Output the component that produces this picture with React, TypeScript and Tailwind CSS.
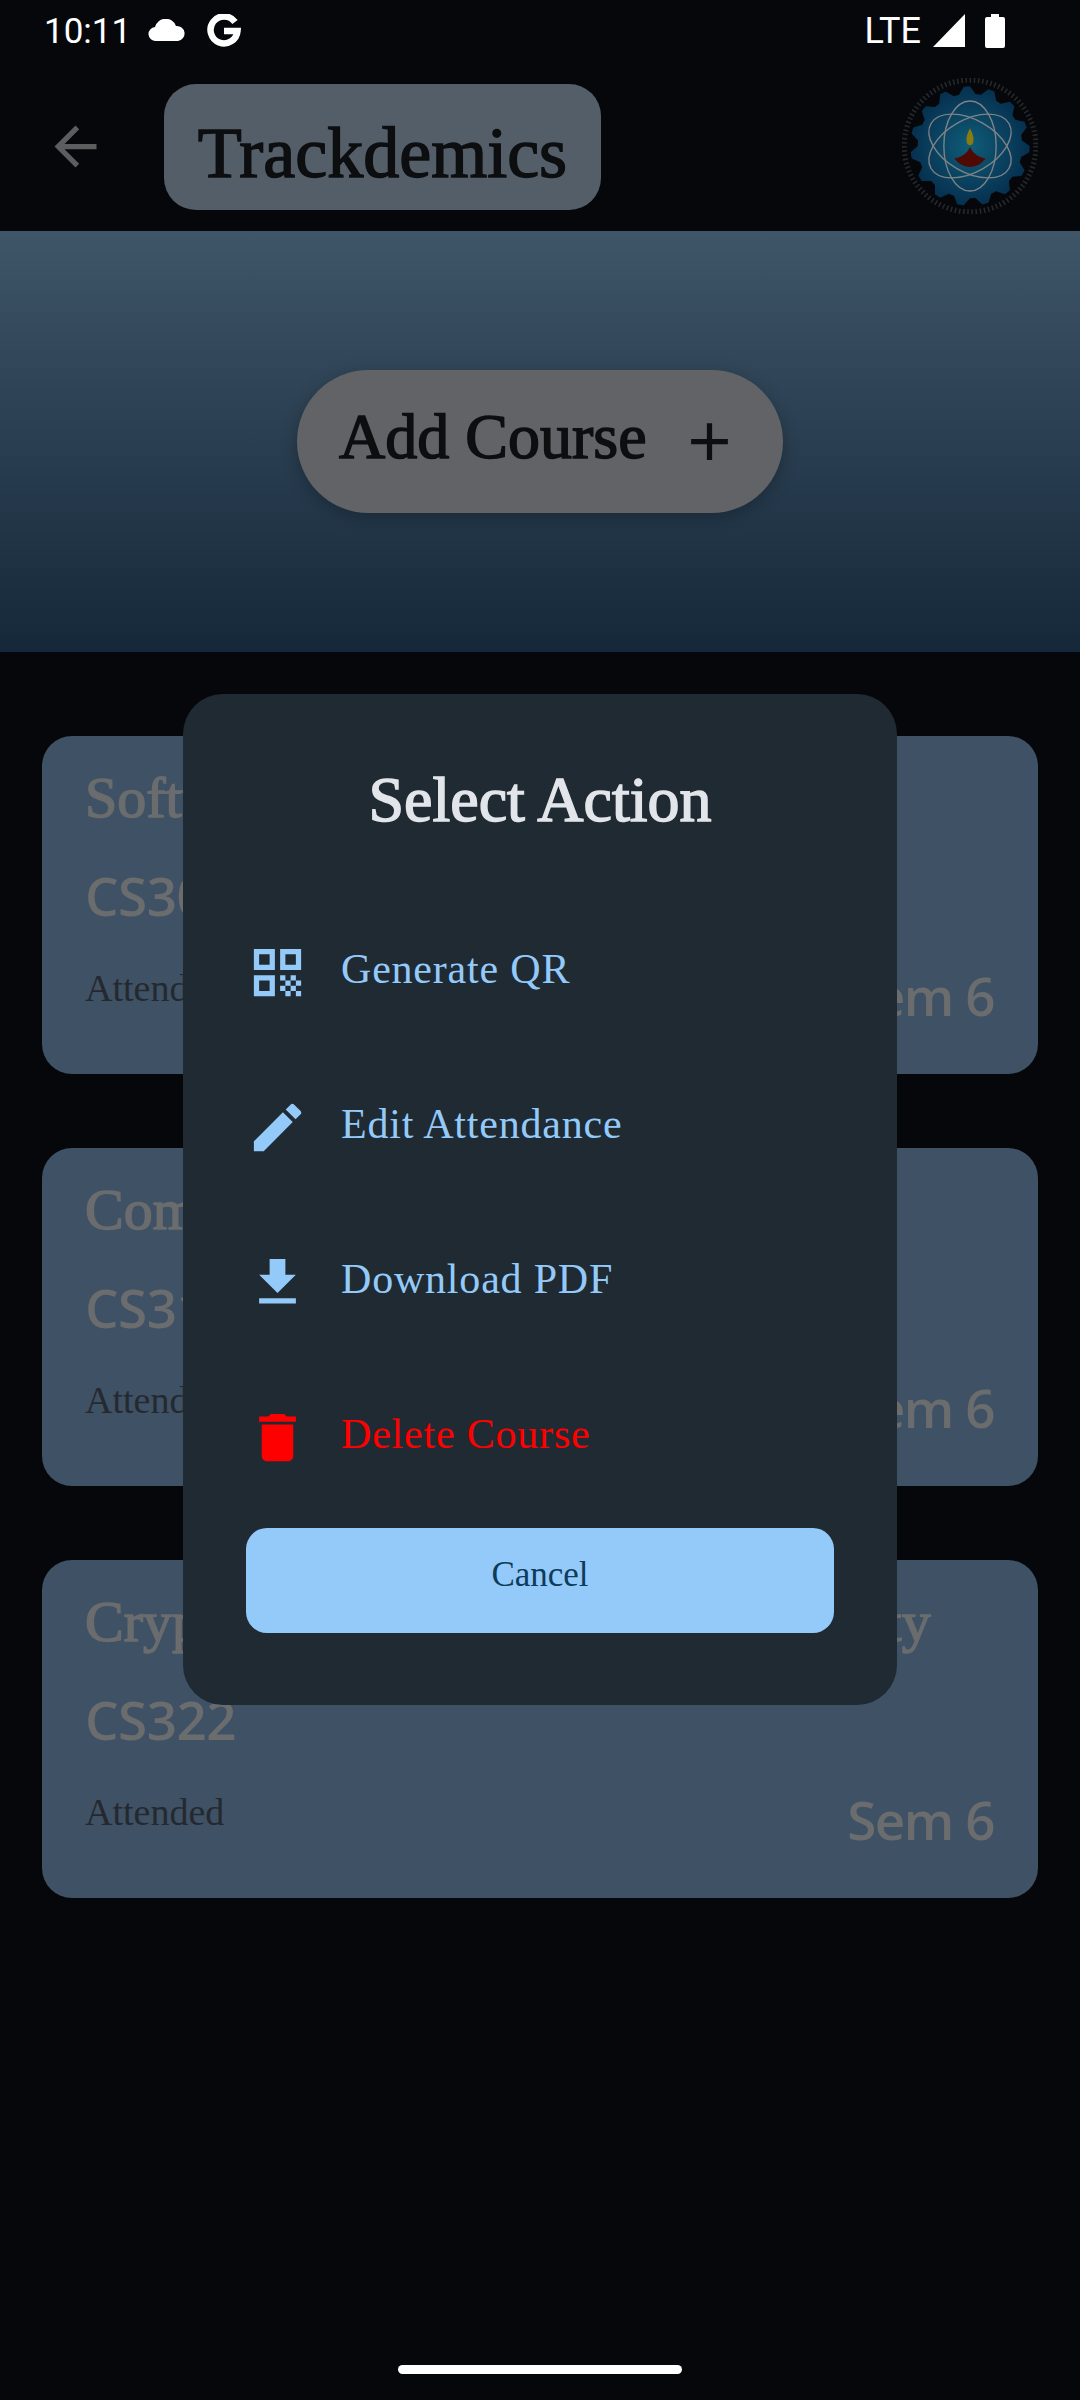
import { MdAdd, MdArrowBack, MdDelete, MdEdit, MdFileDownload, MdQrCode } from "react-icons/md";

const serif = "font-['Liberation_Serif',serif]";
const sans = "font-['Open_Sans',sans-serif]";

const courses = [
  { name: "Software Engineering", code: "CS301" },
  { name: "Compiler Design", code: "CS311" },
  { name: "Cryptography and Network Security", code: "CS322" },
];

const actions = [
  { label: "Generate QR", Icon: MdQrCode, color: "text-[#94caf9]" },
  { label: "Edit Attendance", Icon: MdEdit, color: "text-[#94caf9]" },
  { label: "Download PDF", Icon: MdFileDownload, color: "text-[#94caf9]" },
  { label: "Delete Course", Icon: MdDelete, color: "text-[#ff0000]" },
];

const gearPath = () => {
  const teeth = 15;
  const pts: string[] = [];
  for (let i = 0; i < teeth * 4; i++) {
    const r = i % 4 === 0 || i % 4 === 1 ? 57 : 50;
    const a = (i / (teeth * 4)) * Math.PI * 2;
    pts.push(`${(65 + r * Math.cos(a)).toFixed(1)},${(65 + r * Math.sin(a)).toFixed(1)}`);
  }
  return pts.join(" ");
};

const Logo = () => (
  <svg width="136" height="136" viewBox="0 0 130 130">
    <defs>
      <radialGradient id="gear">
        <stop offset="0%" stopColor="#0f5c78" />
        <stop offset="100%" stopColor="#06304f" />
      </radialGradient>
    </defs>
    <circle cx="65" cy="65" r="63" fill="none" stroke="#26292c" strokeWidth="5" strokeDasharray="1.5 2.5" />
    <polygon points={gearPath()} fill="url(#gear)" />
    <g fill="none" stroke="#7f8386" strokeWidth="1.3">
      <ellipse cx="65" cy="65" rx="25" ry="43" />
      <ellipse cx="65" cy="65" rx="25" ry="43" transform="rotate(60 65 65)" />
      <ellipse cx="65" cy="65" rx="25" ry="43" transform="rotate(-60 65 65)" />
    </g>
    <path d="M65 48c3 6 4 10 3 14-1 3-5 3-6 0-1-4 0-8 3-14z" fill="#8a7a12" />
    <path d="M50 77c6-1 12-4 15-11 3 7 9 10 15 11-4 5-9 8-15 8s-11-3-15-8z" fill="#4f0a05" />
  </svg>
);

const StatusBar = () => (
  <div className="h-[62px] flex items-center justify-between pl-[44px] pr-[75px] text-white">
    <div className="flex items-center">
      <span className="font-['Roboto',sans-serif] text-[35px] leading-none">10:11</span>
      <svg className="ml-[17px]" width="38" height="24" viewBox="0 0 38 24" fill="white">
        <path d="M8 22a7 7 0 0 1-1-14 11 11 0 0 1 21-1 7.5 7.5 0 0 1 2 15z" />
      </svg>
      <svg className="ml-[21px]" width="34" height="34" viewBox="0 0 34 34" fill="none" stroke="white" strokeWidth="6.5">
        <path d="M28 8a13.5 13.5 0 1 0 2.5 9H17" />
      </svg>
    </div>
    <div className="flex items-center">
      <span className="font-['Roboto',sans-serif] text-[36px] leading-none">LTE</span>
      <svg className="ml-[12px]" width="32" height="34" viewBox="0 0 32 34" fill="white">
        <path d="M32 0v33H0z" />
      </svg>
      <svg className="ml-[20px]" width="20" height="34" viewBox="0 0 20 34" fill="white">
        <path d="M6 0h8v3h4a2 2 0 0 1 2 2v27a2 2 0 0 1-2 2H2a2 2 0 0 1-2-2V5a2 2 0 0 1 2-2h4z" />
      </svg>
    </div>
  </div>
);

const CourseCard = ({ name, code }: { name: string; code: string }) => (
  <div className="bg-[#3e5165] rounded-[30px] h-[338px] pl-[43px] pr-[44px] pt-[26px]">
    <div className={`${serif} text-[58px] leading-[72px] text-[#6b6c6d] [-webkit-text-stroke:1.5px_#6b6c6d] whitespace-nowrap`}>{name}</div>
    <div className={`${sans} font-semibold text-[53px] leading-[68px] tracking-[-0.5px] mt-[28px] text-[#6b6c6d]`}>{code}</div>
    <div className="flex justify-between items-start mt-[20px]">
      <span className={`${serif} text-[38px] leading-[76px] text-[#25292f]`}>Attended</span>
      <span className={`${sans} font-semibold text-[53px] leading-[76px] tracking-[-1.5px] mt-[8px] text-[#6b6c6d]`}>Sem 6</span>
    </div>
  </div>
);

export default function App() {
  return (
    <div className="relative w-[1080px] h-[2400px] overflow-hidden bg-[#05070a]">
      <StatusBar />

      <div className="h-[169px] flex items-center pl-[44px] pr-[42px]">
        <MdArrowBack className="text-[#5b5d5f] shrink-0" size={63} />
        <div className="ml-[57px] w-[437px] h-[126px] rounded-[32px] bg-[#545e68] flex items-center justify-center">
          <span className={`${serif} pt-[12px] text-[72px] leading-none text-[#0c0e10] [-webkit-text-stroke:1.5px_#0c0e10]`}>Trackdemics</span>
        </div>
        <div className="ml-auto mb-[2px]">
          <Logo />
        </div>
      </div>

      <div className="h-[421px] flex items-center justify-center bg-gradient-to-b from-[#3f5668] to-[#15283a]">
        <div className="w-[486px] h-[143px] rounded-full bg-[#616366] shadow-[0_4px_16px_rgba(0,0,0,0.25)] flex items-center pl-[42px]">
          <span className={`${serif} mb-[10px] text-[64px] leading-none text-[#0c0e10] [-webkit-text-stroke:1.5px_#0c0e10]`}>Add Course</span>
          <MdAdd className="ml-[31px] text-[#0c0e10]" size={63} />
        </div>
      </div>

      <div className="px-[42px] pt-[84px] flex flex-col gap-[74px]">
        {courses.map((c) => (
          <CourseCard key={c.code} name={c.name} code={c.code} />
        ))}
      </div>

      <div className="absolute left-[183px] top-[694px] w-[714px] h-[1011px] rounded-[40px] bg-[#202a33] px-[63px] pt-[60px]">
        <div className={`${serif} text-[64px] leading-[92px] text-center text-[#e2e5e9] [-webkit-text-stroke:1.5px_#e2e5e9]`}>Select Action</div>
        <div className="mt-[49px] flex flex-col">
          {actions.map(({ label, Icon, color }) => (
            <div key={label} className={`h-[155px] flex items-center ${color}`}>
              <Icon size={63} className="shrink-0" />
              <span className={`${serif} ml-[32px] mb-[6px] text-[42px] tracking-[0.8px]`}>{label}</span>
            </div>
          ))}
        </div>
        <div className="mt-[13px] h-[105px] rounded-[21px] bg-[#94caf9] flex items-center justify-center">
          <span className={`${serif} pb-[10px] text-[35px] text-[#0d3c5c]`}>Cancel</span>
        </div>
      </div>

      <div className="absolute left-[398px] top-[2365px] w-[284px] h-[9px] rounded-full bg-white" />
    </div>
  );
}
